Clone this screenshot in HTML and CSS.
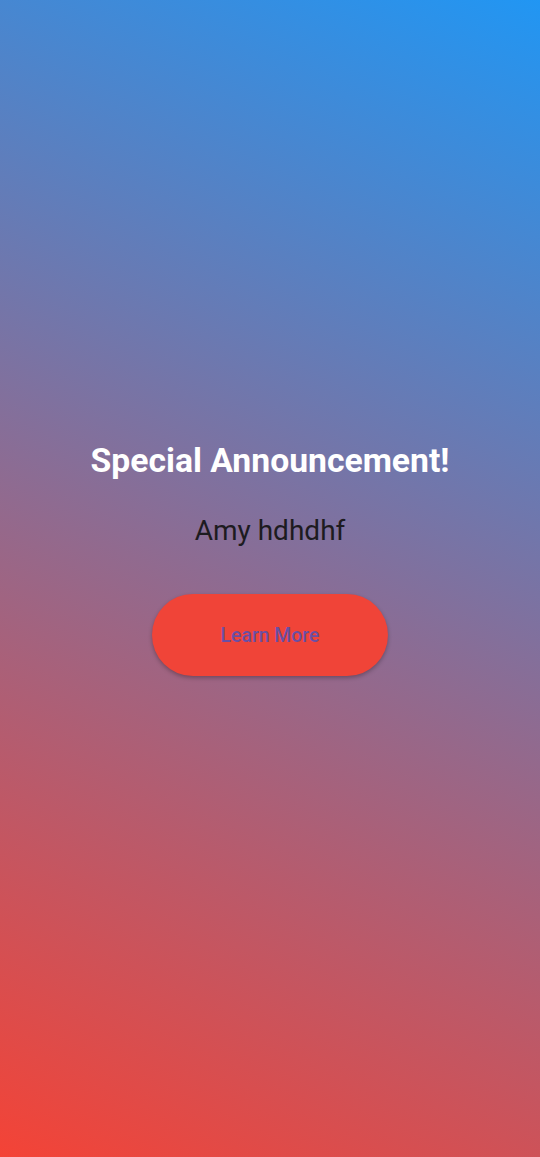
FILE: index.html
```html
<!DOCTYPE html>
<html>
<head>
<meta charset="utf-8">
<link rel="stylesheet" href="styles.css">
</head>
<body>
<main class="screen">
  <h1 class="title">Special Announcement!</h1>
  <p class="subtitle">Amy hdhdhf</p>
  <button class="cta">Learn More</button>
</main>
</body>
</html>
```
FILE: styles.css
```css
html, body {
  margin: 0;
  padding: 0;
  height: 100%;
}
body {
  font-family: Roboto, "Liberation Sans", sans-serif;
}
.screen {
  box-sizing: border-box;
  height: 1157px;
  width: 540px;
  background: linear-gradient(25deg, #f44336 0%, #2196f3 100%);
  display: flex;
  flex-direction: column;
  align-items: center;
  justify-content: center;
  padding-bottom: 40px;
}
.title {
  margin: 0;
  font-size: 33.7px;
  line-height: 40px;
  font-weight: 700;
  color: #ffffff;
}
.subtitle {
  margin: 34px 0 0;
  font-size: 28px;
  line-height: 32px;
  font-weight: 400;
  color: #1d1b20;
}
.cta {
  margin-top: 47px;
  width: 236px;
  height: 82px;
  border: none;
  border-radius: 41px;
  background: #f04438;
  color: #6a4fa3;
  font-family: Roboto, "Liberation Sans", sans-serif;
  font-size: 19.4px;
  font-weight: 500;
  box-shadow: 0 2px 4px rgba(0, 0, 0, 0.28);
}
```
